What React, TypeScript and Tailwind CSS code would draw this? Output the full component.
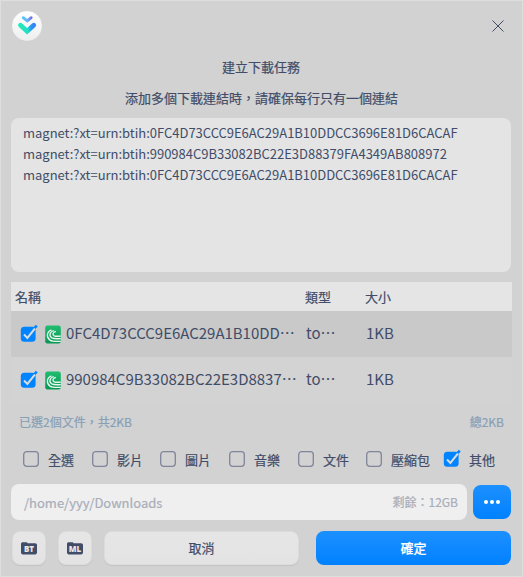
import React from 'react';

const magnets = [
  'magnet:?xt=urn:btih:0FC4D73CCC9E6AC29A1B10DDCC3696E81D6CACAF',
  'magnet:?xt=urn:btih:990984C9B33082BC22E3D88379FA4349AB808972',
  'magnet:?xt=urn:btih:0FC4D73CCC9E6AC29A1B10DDCC3696E81D6CACAF',
];

const files = [
  { name: '0FC4D73CCC9E6AC29A1B10DD…', type: 'to…', size: '1KB', row: 'bg-[#c9c9c9]' },
  { name: '990984C9B33082BC22E3D8837…', type: 'to…', size: '1KB', row: 'bg-[#d3d3d3]' },
];

const filters = [
  { label: '全選', checked: false, width: 'w-[69px]' },
  { label: '影片', checked: false, width: 'w-[68px]' },
  { label: '圖片', checked: false, width: 'w-[69px]' },
  { label: '音樂', checked: false, width: 'w-[69px]' },
  { label: '文件', checked: false, width: 'w-[68px]' },
  { label: '壓縮包', checked: false, width: 'w-[78px]' },
  { label: '其他', checked: true, width: 'w-[60px]' },
];

function Check({ checked }: { checked: boolean }) {
  return (
    <svg className="block h-[18px] w-[18px] shrink-0 overflow-visible" viewBox="0 0 18 18" fill="none">
      {checked ? (
        <>
          <rect x="0.8" y="1.8" width="14.8" height="15" rx="3.5" fill="#0084ff" />
          <path d="M4 9.5 7.4 12.9 15.4 2.9" stroke="#d9dde2" strokeWidth="2" />
          <path d="M14.4 3.2 16.8 0.6" stroke="#0084ff" strokeWidth="2.6" />
        </>
      ) : (
        <rect x="1.7" y="1.7" width="14.6" height="14.6" rx="3" stroke="#81859b" strokeWidth="1.3" />
      )}
    </svg>
  );
}

function TorrentIcon() {
  return (
    <svg className="block h-[19px] w-4 shrink-0" viewBox="0 0 16 19" fill="none">
      <defs>
        <linearGradient id="torrent" x1="0" y1="0" x2="0" y2="1">
          <stop stopColor="#20bd70" />
          <stop offset="1" stopColor="#089654" />
        </linearGradient>
      </defs>
      <rect x="0.2" y="0.5" width="15.6" height="18" rx="2.2" fill="url(#torrent)" />
      <g stroke="#e9f7ef" strokeWidth="1.3">
        <path d="M6.4 4.8C1.4 7 1.2 12.4 5 15.1c2.6 1.8 6.4 1.4 10.8 1.3" />
        <path d="M8.8 5.5C4.2 7 4 11.2 6.8 12.9c2.2 1.2 5 .8 9 .8" />
        <path d="M10.9 6.3C7.4 7.3 7.3 9.9 9.2 10.8c1.6.7 3.8.4 6.6.4" />
      </g>
    </svg>
  );
}

function FolderIcon({ label }: { label: string }) {
  return (
    <svg className="block h-[13px] w-4" viewBox="0 0 16 13">
      <path d="M0 2C0 .8.7.2 1.8.2h3.4c.8 0 1 .3 1.4 1h7.6c1.1 0 1.8.7 1.8 1.8v7.6c0 1.2-.7 1.8-1.8 1.8H1.8C.7 12.4 0 11.8 0 10.6Z" fill="#414d68" />
      <text x="8" y="9.6" textAnchor="middle" fontSize="8" fontWeight="800" fill="#e8e8e8" fontFamily="Open Sans, sans-serif">{label}</text>
    </svg>
  );
}

function Logo() {
  return (
    <svg className="block h-[32px] w-[32px]" viewBox="0 0 32 32" fill="none">
      <defs>
        <linearGradient id="disc" x1="0" y1="0" x2="0" y2="1">
          <stop stopColor="#fff" />
          <stop offset="1" stopColor="#eee" />
        </linearGradient>
        <linearGradient id="upper" x1="11" y1="8" x2="21" y2="8" gradientUnits="userSpaceOnUse">
          <stop stopColor="#4cc5ff" />
          <stop offset=".5" stopColor="#64b9fa" />
          <stop offset="1" stopColor="#7867e4" />
        </linearGradient>
        <linearGradient id="lower" x1="7" y1="17" x2="25" y2="13" gradientUnits="userSpaceOnUse">
          <stop stopColor="#20eeb4" />
          <stop offset=".5" stopColor="#25dcc9" />
          <stop offset=".68" stopColor="#2b94f5" />
          <stop offset="1" stopColor="#3a7cfb" />
        </linearGradient>
      </defs>
      <circle cx="16" cy="16" r="15.3" fill="url(#disc)" stroke="#c7c7c7" strokeWidth=".5" />
      <path d="M12.2 7.7 16.2 10.9 20.2 7.7" stroke="url(#upper)" strokeWidth="2.8" strokeLinecap="round" />
      <path d="M9.5 15.2 16.1 21.2 22.7 15.2" stroke="url(#lower)" strokeWidth="4.8" strokeLinecap="round" />
    </svg>
  );
}

const softButton =
  'flex h-[34px] items-center justify-center rounded-lg border border-[#dcdcdc] bg-linear-to-b from-[#e6e6e6] to-[#e3e3e3] shadow-[0_1px_1px_#c2c2c2]';

export default function App() {
  return (
    <main lang="zh-Hant-TW" className="flex h-[577px] w-[523px] flex-col overflow-hidden border border-[#dedede] bg-[#d2d2d2] px-2.5 font-['Noto_Sans_CJK_TC',sans-serif] text-[13px] text-[#414d68] [-webkit-text-stroke:0.2px]">
      <header className="flex h-[50px] shrink-0 items-center justify-between pr-2">
        <Logo />
        <button aria-label="關閉">
          <svg className="block h-3 w-3" viewBox="0 0 12 12">
            <path d="M.5.5 11.5 11.5M11.5.5.5 11.5" stroke="#414d68" strokeWidth="1" />
          </svg>
        </button>
      </header>

      <h1 className="h-[31px] shrink-0 pr-px text-center leading-[31px]">建立下載任務</h1>
      <p className="h-[31px] shrink-0 text-center leading-[31px]">添加多個下載連結時，請確保每行只有一個連結</p>

      <div className="mt-[5px] h-[154px] w-[500px] shrink-0 rounded-lg bg-[#e4e4e4] px-3 pt-1 leading-[21px] tracking-[-0.015px] [-webkit-text-stroke:0px]">
        {magnets.map((m, i) => (
          <div key={i} className="whitespace-nowrap">{m}</div>
        ))}
      </div>

      <section className="mt-2.5 w-[501px] shrink-0">
        <div className="flex h-[29px] items-center bg-[#e5e5e5]">
          <span className="w-[290px] pl-1">名稱</span>
          <span className="w-[60px] pl-1">類型</span>
          <span className="pl-1">大小</span>
        </div>
        {files.map((f) => (
          <div key={f.name} className={`flex h-[46px] items-center pb-0.5 text-[15px] [-webkit-text-stroke:0px] ${f.row}`}>
            <div className="flex w-[295px] items-center pl-[9px]">
              <span className="pt-0.5"><Check checked /></span>
              <span className="ml-[7px] pt-0.5"><TorrentIcon /></span>
              <span className="ml-[5px] whitespace-nowrap tracking-[-0.02px]">{f.name}</span>
            </div>
            <span className="w-[60px]">{f.type}</span>
            <span>{f.size}</span>
          </div>
        ))}
      </section>

      <div className="flex h-[38px] shrink-0 items-center justify-between pr-2 pl-2 text-xs text-[#87a0b6]">
        <span>已選2個文件，共2KB</span>
        <span>總2KB</span>
      </div>

      <div className="flex h-[38px] shrink-0 items-center pb-0.5 pl-[11px]">
        {filters.map((f) => (
          <label key={f.label} className={`flex shrink-0 items-center gap-2 ${f.width}`}>
            <Check checked={f.checked} />
            <span className="pt-px whitespace-nowrap">{f.label}</span>
          </label>
        ))}
      </div>

      <div className="mt-[5px] flex h-9 w-[500px] shrink-0 items-center gap-1.5">
        <div className="flex h-9 w-[456px] items-center justify-between rounded-lg bg-[#efefef] pr-[9px] pl-[13px] text-[#a8adb9]">
          <span className="pt-0.5">/home/yyy/Downloads</span>
          <span className="text-xs">剩餘：12GB</span>
        </div>
        <button aria-label="選擇資料夾" className="flex h-[34px] w-[38px] items-center justify-center gap-0.5 rounded-lg bg-linear-to-b from-[#1b90ff] to-[#0081ff]">
          <i className="h-1 w-1 rounded-full bg-white" />
          <i className="h-1 w-1 rounded-full bg-white" />
          <i className="h-1 w-1 rounded-full bg-white" />
        </button>
      </div>

      <footer className="mt-[11px] ml-px flex w-[499px] shrink-0">
        <button className={`${softButton} w-[34px]`}><FolderIcon label="BT" /></button>
        <button className={`${softButton} ml-3 w-[34px]`}><FolderIcon label="ML" /></button>
        <button className={`${softButton} ml-3 w-[195px]`}>取消</button>
        <button className="ml-[17px] h-[34px] w-[195px] rounded-lg bg-linear-to-b from-[#1b90ff] to-[#0081ff] font-medium text-white">確定</button>
      </footer>
    </main>
  );
}
